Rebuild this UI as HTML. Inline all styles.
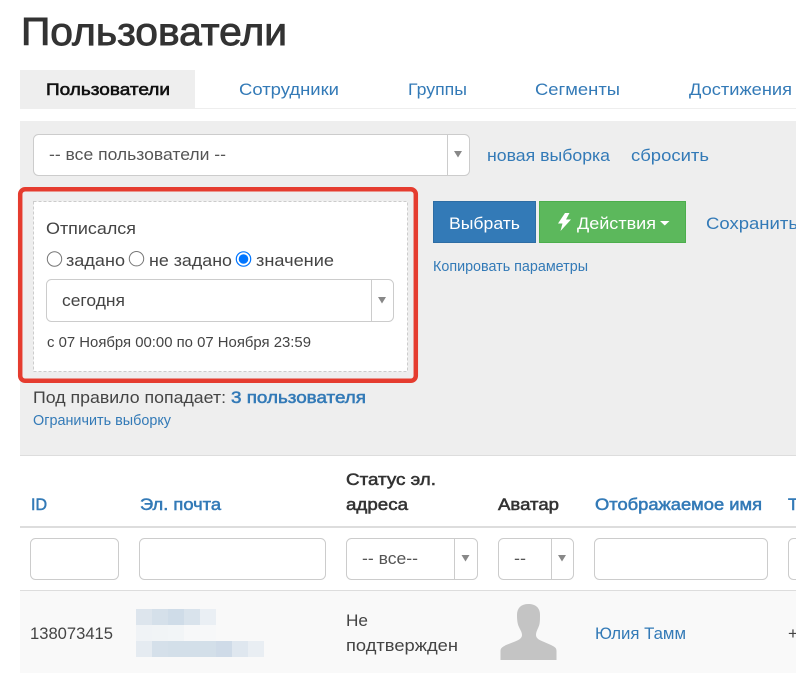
<!DOCTYPE html>
<html lang="ru">
<head>
<meta charset="utf-8">
<title>Пользователи</title>
<style>
html,body{margin:0;padding:0;width:796px;height:673px;overflow:hidden;background:#fff}
svg{display:block}
text{font-family:"Liberation Sans","DejaVu Sans",sans-serif;font-size:17px;fill:#444;white-space:pre}
.l{fill:#337ab7}
.b{font-weight:normal;stroke-width:.55px;stroke:currentColor}
.bl{color:#337ab7}
.bd{color:#333}
.s{font-size:15px}
.f{fill:#fff;stroke:#ccc;stroke-width:1}
.d{stroke:#ccc;stroke-width:1}
.a{fill:#888}
</style>
</head>
<body>
<svg width="796" height="673" viewBox="0 0 796 673" xmlns="http://www.w3.org/2000/svg">
<rect width="796" height="673" fill="#fff"/>
<text x="21" y="45" textLength="266" lengthAdjust="spacingAndGlyphs" style="font-size:39px;fill:#333;stroke:#333;stroke-width:.9px">Пользователи</text>

<rect x="20" y="70" width="175" height="39" fill="#eee"/>
<rect x="195" y="108" width="601" height="1" fill="#eee"/>
<text x="46" y="95" textLength="124" lengthAdjust="spacingAndGlyphs" style="fill:#111;stroke:#111;stroke-width:.6px">Пользователи</text>
<text x="239" y="95" textLength="100" lengthAdjust="spacingAndGlyphs" class="l">Сотрудники</text>
<text x="408" y="95" textLength="59" lengthAdjust="spacingAndGlyphs" class="l">Группы</text>
<text x="535" y="95" textLength="85" lengthAdjust="spacingAndGlyphs" class="l">Сегменты</text>
<text x="689" y="95" textLength="103" lengthAdjust="spacingAndGlyphs" class="l">Достижения</text>

<rect x="20" y="121" width="776" height="334" fill="#eee"/>
<rect x="20" y="455" width="776" height="1" fill="#ddd"/>

<rect x="33.5" y="134.5" width="436" height="41" rx="5" class="f"/>
<path d="M447.5 135v40" class="d"/>
<path d="M454 151h8l-4 6.500z" class="a"/>
<text x="49" y="160" textLength="177" lengthAdjust="spacingAndGlyphs" style="fill:#555">-- все пользователи --</text>
<text x="487" y="161" textLength="123" lengthAdjust="spacingAndGlyphs" class="l">новая выборка</text>
<text x="631" y="161" textLength="78" lengthAdjust="spacingAndGlyphs" class="l">сбросить</text>

<rect x="20.2" y="189.2" width="395.6" height="191.6" rx="5" fill="#eee" stroke="#e53c2f" stroke-width="4.5"/>
<rect x="33.5" y="201.5" width="374" height="170" fill="#fff" stroke="#ccc" stroke-width="1" stroke-dasharray="3 2"/>
<text x="46" y="234" textLength="90" lengthAdjust="spacingAndGlyphs">Отписался</text>

<circle cx="54.5" cy="259" r="7.200" fill="#fff" stroke="#767676" stroke-width="1"/>
<text x="66" y="266" textLength="59" lengthAdjust="spacingAndGlyphs">задано</text>
<circle cx="136.5" cy="258.7" r="7.200" fill="#fff" stroke="#767676" stroke-width="1"/>
<text x="149" y="266" textLength="83" lengthAdjust="spacingAndGlyphs">не задано</text>
<circle cx="243.5" cy="259" r="7.200" fill="#fff" stroke="#0075ff" stroke-width="1.2"/>
<circle cx="243.5" cy="259" r="4.800" fill="#0075ff"/>
<text x="256" y="266" textLength="78" lengthAdjust="spacingAndGlyphs">значение</text>

<rect x="46.5" y="279.5" width="347" height="42" rx="5" class="f"/>
<path d="M371.5 280v41" class="d"/>
<path d="M378 297h8l-4 6.500z" class="a"/>
<text x="62" y="306" textLength="63" lengthAdjust="spacingAndGlyphs">сегодня</text>
<text x="47" y="347" textLength="264" lengthAdjust="spacingAndGlyphs" class="s">с 07 Ноября 00:00 по 07 Ноября 23:59</text>

<text x="33" y="403" textLength="193" lengthAdjust="spacingAndGlyphs">Под правило попадает:</text>
<text x="231" y="403" textLength="135" lengthAdjust="spacingAndGlyphs" class="l b bl">3 пользователя</text>
<text x="33" y="425" textLength="138" lengthAdjust="spacingAndGlyphs" class="l s">Ограничить выборку</text>

<rect x="433.500" y="201.500" width="102" height="41" fill="#337ab7" stroke="#2e6da4"/>
<text x="449" y="229" textLength="71" lengthAdjust="spacingAndGlyphs" style="fill:#fff">Выбрать</text>
<rect x="539.500" y="201.500" width="146" height="41" fill="#5cb85c" stroke="#4cae4c"/>
<path d="M565 213l-7 10.500h4.500l-2 7.500 10.500-11.500h-5l3.500-6.500z" fill="#fff"/>
<text x="577" y="229" textLength="79" lengthAdjust="spacingAndGlyphs" style="fill:#fff">Действия</text>
<path d="M660 221h9.500l-4.750 4.500z" fill="#fff"/>
<text x="706" y="229" textLength="92" lengthAdjust="spacingAndGlyphs" class="l">Сохранить</text>
<text x="433" y="271" textLength="155" lengthAdjust="spacingAndGlyphs" class="l s">Копировать параметры</text>

<text x="31" y="510" textLength="16" lengthAdjust="spacingAndGlyphs" class="l b bl">ID</text>
<text x="140" y="510" textLength="81" lengthAdjust="spacingAndGlyphs" class="l b bl">Эл. почта</text>
<text x="346" y="485" textLength="90" lengthAdjust="spacingAndGlyphs" class="b bd" style="fill:#333">Статус эл.</text>
<text x="346" y="510" textLength="62" lengthAdjust="spacingAndGlyphs" class="b bd" style="fill:#333">адреса</text>
<text x="498" y="510" textLength="61" lengthAdjust="spacingAndGlyphs" class="b bd" style="fill:#333">Аватар</text>
<text x="595" y="510" textLength="167" lengthAdjust="spacingAndGlyphs" class="l b bl">Отображаемое имя</text>
<text x="788" y="510" class="l b bl">Т</text>
<rect x="20" y="526" width="776" height="2" fill="#ddd"/>

<rect x="30.500" y="538.500" width="88" height="41" rx="5" class="f"/>
<rect x="139.500" y="538.500" width="186" height="41" rx="5" class="f"/>
<rect x="346.500" y="538.500" width="131" height="41" rx="5" class="f"/>
<path d="M454.500 539v40" class="d"/>
<path d="M461.500 555h8l-4 6.500z" class="a"/>
<text x="362" y="564" textLength="56" lengthAdjust="spacingAndGlyphs" style="fill:#555">-- все--</text>
<rect x="498.500" y="538.500" width="75" height="41" rx="5" class="f"/>
<path d="M551.500 539v40" class="d"/>
<path d="M558 555h8l-4 6.500z" class="a"/>
<text x="514" y="564" textLength="12" lengthAdjust="spacingAndGlyphs" style="fill:#555">--</text>
<rect x="594.500" y="538.500" width="173" height="41" rx="5" class="f"/>
<rect x="788.500" y="538.500" width="30" height="41" rx="5" class="f"/>

<rect x="20" y="590" width="776" height="83" fill="#f9f9f9"/>
<rect x="20" y="590" width="776" height="1" fill="#ddd"/>
<text x="30" y="639" textLength="83" lengthAdjust="spacingAndGlyphs">138073415</text>

<g shape-rendering="crispEdges">
<rect x="136" y="609" width="16" height="16" fill="#dde5ed"/>
<rect x="152" y="609" width="16" height="16" fill="#d5e0ea"/>
<rect x="168" y="609" width="16" height="16" fill="#cfdce8"/>
<rect x="184" y="609" width="16" height="16" fill="#d9e3ec"/>
<rect x="200" y="609" width="16" height="16" fill="#eaeff4"/>
<rect x="136" y="625" width="16" height="16" fill="#f0f3f6"/>
<rect x="152" y="625" width="16" height="16" fill="#f1f4f6"/>
<rect x="168" y="625" width="16" height="16" fill="#f2f5f7"/>
<rect x="184" y="625" width="32" height="16" fill="#f7f8f9"/>
<rect x="136" y="641" width="16" height="16" fill="#e5ebf1"/>
<rect x="152" y="641" width="16" height="16" fill="#d5e0ea"/>
<rect x="168" y="641" width="48" height="16" fill="#d3dfe9"/>
<rect x="216" y="641" width="16" height="16" fill="#cfdbe8"/>
<rect x="232" y="641" width="16" height="16" fill="#dfe7ef"/>
<rect x="248" y="641" width="16" height="16" fill="#e9eef3"/>
</g>

<text x="346" y="626" textLength="22" lengthAdjust="spacingAndGlyphs">Не</text>
<text x="346" y="651" textLength="112" lengthAdjust="spacingAndGlyphs">подтвержден</text>

<path d="M528 604c8 0 12 4 12 11 0 5 0 9-1.500 12-1 2.500-2.500 5-2.500 8 0 3 3 5 7 6.500l8 3.500c4 2 5.500 3 5.500 6v9h-56v-9c0-3 2-4 5.500-6l9-3.500c4-1.500 7-3.500 7-6.500 0-3-2-5.500-3-8-1.500-3-2-7-2-12 0-7 4-11 11.500-11z" fill="#c4c4c4"/>

<text x="595" y="639" textLength="91" lengthAdjust="spacingAndGlyphs" class="l">Юлия Тамм</text>
<text x="788" y="639">+</text>
</svg>
</body>
</html>
